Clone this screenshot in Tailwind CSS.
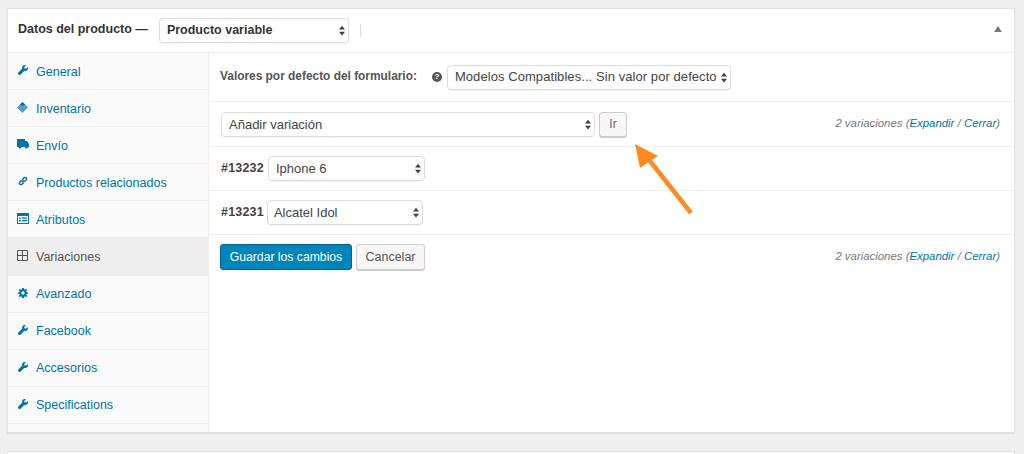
<!DOCTYPE html>
<html lang="es">
<head>
  <meta charset="UTF-8">
  <title>Datos del producto</title>
  <script src="https://cdn.jsdelivr.net/npm/@tailwindcss/browser@4"></script>
</head>
<body class="relative h-[454px] w-[1024px] overflow-hidden bg-[#f0f0f0] font-['Liberation_Sans',Arial,sans-serif] text-[13px] text-[#444]">

  <svg class="hidden">
    <symbol id="updown" viewBox="0 0 8 13"><path d="M4 0 8 5H0zM4 13 0 8h8z" fill="#3c434a"/></symbol>
    <symbol id="wrench" viewBox="0 0 12 12"><path d="M11.600 2.400 9.500 4.400 7.800 4 7.400 2.400 9.500.4C8.200-.3 6.700 0 5.800.9 4.900 1.800 4.700 3.200 5.200 4.300L.4 9.100c-.5.5-.5 1.500 0 2l.5.5c.6.5 1.500.5 2 0l4.800-4.800c1.100.5 2.500.3 3.400-.6.9-.9 1.200-2.500.5-3.800z" fill="#0073aa"/></symbol>
  </svg>

  <!-- main panel -->
  <div class="absolute left-[7px] top-[8px] w-[1008px] border border-[#e1e1e1] bg-white shadow-[0_1px_1px_rgba(0,0,0,0.06)]">

    <div class="flex h-[44px] items-center border-b border-[#eee] pl-[10px] pr-[12px]">
      <span class="-mt-[2px] text-[12.5px] font-bold text-[#333]">Datos del producto —</span>
      <div class="relative ml-[11px] flex h-[25px] w-[190px] items-center rounded-[4px] border border-[#ddd] bg-white pl-[7px] text-[12.5px] font-bold text-[#333] shadow-[0_1px_1px_rgba(0,0,0,0.05)]">
        Producto variable
        <svg class="absolute right-[3px] top-[6px] h-[11px] w-[6px]"><use href="#updown"/></svg>
      </div>
      <div class="ml-[11px] h-[13px] w-px bg-[#ddd]"></div>
      <svg class="ml-auto -mt-[3px] h-[6px] w-[8px]" viewBox="0 0 9 7"><path d="M4.500 0 9 7H0z" fill="#72777c"/></svg>
    </div>

    <div class="flex h-[379px]">
      <!-- tabs -->
      <ul class="w-[201px] shrink-0 border-r border-[#eee] bg-[#fafafa] text-[12.5px] text-[#0073aa]">
        <li class="flex h-[37px] items-center border-b border-[#eee] pl-[10px] pt-[2px]">
          <svg class="-mt-[4px] mr-[8px] h-[10px] w-[10px] shrink-0"><use href="#wrench"/></svg><span>General</span>
        </li>
        <li class="flex h-[37px] items-center border-b border-[#eee] pl-[9px] pt-[2px]">
          <svg class="-mt-[4px] mr-[8px] h-[11px] w-[11px] shrink-0" viewBox="0 0 12 12"><path d="M6 0 12 6 6 12 0 6z" fill="#5c9dc0"/><path d="M6 0 9 3 6 4 3 3z" fill="#0073aa"/></svg><span>Inventario</span>
        </li>
        <li class="flex h-[37px] items-center border-b border-[#eee] pl-[9px] pt-[2px]">
          <svg class="-mt-[4px] mr-[7px] h-[10px] w-[12px] shrink-0" viewBox="0 0 12 10"><path d="M0 0h8v2h2l2 3v3h-1a1.500 1.500 0 0 1-3 0H4.500a1.500 1.500 0 0 1-3 0H0z" fill="#0073aa"/></svg><span>Envío</span>
        </li>
        <li class="flex h-[37px] items-center border-b border-[#eee] pl-[10px] pt-[2px]">
          <svg class="-mt-[4px] mr-[8px] h-[10px] w-[10px] shrink-0" viewBox="0 0 12 12"><path d="M5 7 7 5M4.500 5 2 7.500a1.800 1.800 0 0 0 2.500 2.500L7 7.500M7.500 7 10 4.500A1.800 1.800 0 0 0 7.500 2L5 4.500" fill="none" stroke="#0073aa" stroke-width="1.700"/></svg><span>Productos relacionados</span>
        </li>
        <li class="flex h-[37px] items-center border-b border-[#eee] pl-[9px] pt-[2px]">
          <svg class="-mt-[4px] mr-[7px] h-[11px] w-[12px] shrink-0" viewBox="0 0 12 11"><path fill-rule="evenodd" d="M0 0h12v11H0zM1 3v7h10V3zM2 4.500h2v1.200H2zM5 4.500h5v1.200H5zM2 7h2v1.200H2zM5 7h5v1.200H5z" fill="#0073aa"/></svg><span>Atributos</span>
        </li>
        <li class="flex h-[38px] items-center border-b border-[#eee] bg-[#eee] pl-[9px] pt-[1px] text-[#555]">
          <svg class="-mt-[3px] mr-[8px] h-[11px] w-[11px] shrink-0" viewBox="0 0 11 11"><path d="M.5.500h10v10H.5zM5.500.500v10M.5 5.500h10" fill="none" stroke="#555" stroke-width="1"/></svg><span>Variaciones</span>
        </li>
        <li class="flex h-[37px] items-center border-b border-[#eee] pl-[10px] pt-[1px]">
          <svg class="-mt-[3px] mr-[8px] h-[10px] w-[10px] shrink-0" viewBox="0 0 12 12"><path fill-rule="evenodd" d="M4.800 0h2.400l.3 1.700 1 .4L10 1.200 11 2.700l-1 1.300.3 1 1.700.3v1.500l-1.700.3-.3 1 1 1.400L10 11l-1.500-1-1 .4-.3 1.600H4.800l-.3-1.600-1-.4L2 11 1 9.500l1-1.400-.3-1L0 6.800V5.300L1.700 5l.3-1L1 2.700 2 1.200l1.500.9 1-.4zM6 4a2 2 0 1 0 0 4 2 2 0 0 0 0-4z" fill="#0073aa"/></svg><span>Avanzado</span>
        </li>
        <li class="flex h-[37px] items-center border-b border-[#eee] pl-[10px] pt-[1px]">
          <svg class="-mt-[3px] mr-[8px] h-[10px] w-[10px] shrink-0"><use href="#wrench"/></svg><span>Facebook</span>
        </li>
        <li class="flex h-[37px] items-center border-b border-[#eee] pl-[10px] pt-[1px]">
          <svg class="-mt-[3px] mr-[8px] h-[10px] w-[10px] shrink-0"><use href="#wrench"/></svg><span>Accesorios</span>
        </li>
        <li class="flex h-[37px] items-center border-b border-[#eee] pl-[10px] pt-[1px]">
          <svg class="-mt-[3px] mr-[8px] h-[10px] w-[10px] shrink-0"><use href="#wrench"/></svg><span>Specifications</span>
        </li>
      </ul>

      <!-- variations panel -->
      <div class="min-w-0 flex-1">
        <div class="flex h-[49px] items-center border-b border-[#eee] pl-[11px]">
          <span class="text-[11.9px] font-bold text-[#555]">Valores por defecto del formulario:</span>
          <span class="ml-[15px] flex h-[10px] w-[10px] items-center justify-center rounded-full bg-[#555] text-[8px] font-bold leading-none text-white">?</span>
          <div class="relative ml-[5px] flex h-[25px] w-[284px] items-center rounded-[4px] border border-[#ddd] bg-white pl-[7px] tracking-[0.07px] text-[#444] shadow-[0_1px_1px_rgba(0,0,0,0.05)]">
            Modelos Compatibles... Sin valor por defecto
            <svg class="absolute right-[3px] top-[6px] h-[11px] w-[6px]"><use href="#updown"/></svg>
          </div>
        </div>

        <div class="flex h-[45px] items-center border-b border-[#eee] pl-[12px] pr-[14px]">
          <div class="relative flex h-[25px] w-[374px] items-center rounded-[4px] border border-[#ddd] bg-white pl-[7px] pt-[1px] shadow-[0_1px_1px_rgba(0,0,0,0.05)]">
            Añadir variación
            <svg class="absolute right-[3px] top-[6px] h-[11px] w-[6px]"><use href="#updown"/></svg>
          </div>
          <button class="ml-[4px] h-[25px] w-[28px] rounded-[3px] border border-[#ccc] bg-[#f7f7f7] text-[12px] text-[#666] shadow-[0_1px_0_#ccc]">Ir</button>
          <span class="ml-auto -mt-[1px] text-[11.4px] italic text-[#777]">2 variaciones (<a class="text-[#0073aa]">Expandir</a> / <a class="text-[#0073aa]">Cerrar</a>)</span>
        </div>

        <div class="flex h-[44px] items-center border-b border-[#eee] pl-[12px]">
          <strong class="text-[12.5px] tracking-[0.2px] text-[#444]">#13232</strong>
          <div class="relative ml-[4px] flex h-[25px] w-[157px] items-center rounded-[4px] border border-[#ddd] bg-white pl-[7px] shadow-[0_1px_1px_rgba(0,0,0,0.05)]">
            Iphone 6
            <svg class="absolute right-[3px] top-[6px] h-[11px] w-[6px]"><use href="#updown"/></svg>
          </div>
        </div>

        <div class="flex h-[44px] items-center border-b border-[#eee] pl-[12px]">
          <strong class="text-[12.5px] tracking-[0.2px] text-[#444]">#13231</strong>
          <div class="relative ml-[3px] flex h-[25px] w-[156px] items-center rounded-[4px] border border-[#ddd] bg-white pl-[6px] shadow-[0_1px_1px_rgba(0,0,0,0.05)]">
            Alcatel Idol
            <svg class="absolute right-[3px] top-[6px] h-[11px] w-[6px]"><use href="#updown"/></svg>
          </div>
        </div>

        <div class="flex h-[43px] items-center pl-[11px] pr-[14px] pt-[1px]">
          <button class="h-[26px] w-[132px] rounded-[3px] border border-[#006799] bg-[#0085ba] text-[12.2px] text-white">Guardar los cambios</button>
          <button class="ml-[4px] h-[26px] w-[69px] rounded-[3px] border border-[#ccc] bg-[#f7f7f7] text-[12.5px] text-[#555] shadow-[0_1px_0_#ccc]">Cancelar</button>
          <span class="ml-auto text-[11.4px] italic text-[#777]">2 variaciones (<a class="text-[#0073aa]">Expandir</a> / <a class="text-[#0073aa]">Cerrar</a>)</span>
        </div>
      </div>
    </div>
  </div>

  <!-- next panel, cut by the window -->
  <div class="absolute left-[7px] top-[451px] h-[10px] w-[1008px] border border-[#e1e1e1] bg-white"></div>

  <!-- annotation arrow -->
  <svg class="absolute left-[630px] top-[140px] h-[80px] w-[70px]" viewBox="0 0 70 80">
    <path d="M61 73 20 21" stroke="#ff8a24" stroke-width="4.500" fill="none"/>
    <path d="M5 4 28 16 10 28z" fill="#ff8a24"/>
  </svg>
</body>
</html>
